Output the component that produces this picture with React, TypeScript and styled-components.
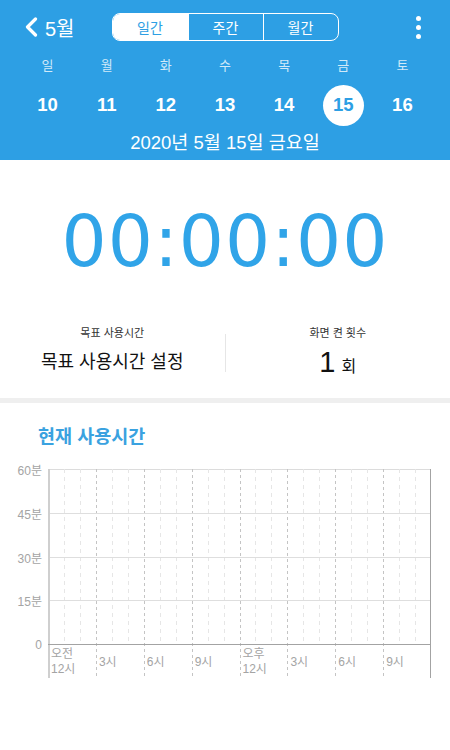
import React from "react";
import styled, { createGlobalStyle } from "styled-components";

const BLUE = "#2d9fe4";

const Global = createGlobalStyle`
  html, body { margin: 0; padding: 0; background: #fff; }
  body { font-family: "Liberation Sans", "Noto Sans CJK KR", sans-serif; }
  * { box-sizing: border-box; }
`;

const Page = styled.div`
  width: 450px;
  min-height: 750px;
  background: #fff;
`;

const Header = styled.header`
  background: ${BLUE};
  color: #fff;
  padding-bottom: 7px;
`;

const TopBar = styled.div`
  display: grid;
  grid-template-columns: 1fr auto 1fr;
  align-items: center;
  height: 54px;
`;

const Back = styled.div`
  justify-self: start;
  display: flex;
  align-items: center;
  gap: 7px;
  padding-left: 25px;
  font-size: 20px;
  color: #fff;
`;

const Segmented = styled.div`
  display: flex;
  border: 1px solid #fff;
  border-radius: 8px;
  overflow: hidden;
  height: 28px;
`;

const Segment = styled.div<{ $active?: boolean }>`
  width: 75px;
  display: flex;
  align-items: center;
  justify-content: center;
  font-size: 14px;
  background: ${(p) => (p.$active ? "#fff" : "transparent")};
  color: ${(p) => (p.$active ? BLUE : "#fff")};
  & + & {
    border-left: 1px solid #fff;
  }
`;

const Kebab = styled.div`
  justify-self: end;
  padding-right: 29px;
  display: flex;
  flex-direction: column;
  gap: 4px;
  span {
    width: 5px;
    height: 5px;
    border-radius: 50%;
    background: #fff;
  }
`;

const WeekGrid = styled.div`
  display: grid;
  grid-template-columns: repeat(7, 1fr);
  padding: 0 18px;
`;

const WeekDay = styled.div`
  height: 20px;
  display: flex;
  align-items: center;
  justify-content: center;
  font-size: 13px;
  color: rgba(255, 255, 255, 0.78);
`;

const DateRow = styled(WeekGrid)`
  margin-top: 10px;
`;

const DateCell = styled.div`
  height: 42px;
  display: flex;
  align-items: center;
  justify-content: center;
`;

const DateNum = styled.div<{ $selected?: boolean }>`
  width: 41px;
  height: 41px;
  border-radius: 50%;
  display: flex;
  align-items: center;
  justify-content: center;
  font-size: 18.5px;
  font-weight: 700;
  background: ${(p) => (p.$selected ? "#fff" : "transparent")};
  color: ${(p) => (p.$selected ? BLUE : "#fff")};
`;

const FullDate = styled.div`
  margin-top: 7px;
  height: 20px;
  line-height: 20px;
  text-align: center;
  font-size: 18.5px;
`;

const TimerSection = styled.section`
  padding-top: 46px;
  display: flex;
  justify-content: center;
`;

const Timer = styled.div`
  font-family: "DejaVu Sans", sans-serif;
  font-size: 71px;
  line-height: 72px;
  height: 72px;
  color: #30a4e8;
  letter-spacing: 1px;
`;

const Stats = styled.section`
  display: flex;
  align-items: flex-start;
  margin-top: 47px;
`;

const Stat = styled.div`
  flex: 1;
  display: flex;
  flex-direction: column;
  align-items: center;
  gap: 9px;
`;

const StatLabel = styled.div`
  font-size: 11px;
  line-height: 16px;
  color: #333;
`;

const StatValue = styled.div`
  font-size: 18px;
  line-height: 24px;
  color: #111;
  display: flex;
  align-items: baseline;
  gap: 6px;
`;

const BigNum = styled.span`
  font-size: 29px;
  line-height: 24px;
`;

const Unit = styled.span`
  font-size: 16px;
`;

const Divider = styled.div`
  width: 1px;
  height: 38px;
  margin-top: 9px;
  background: #e6e6e6;
`;

const Band = styled.div`
  height: 5px;
  background: #efefef;
  margin-top: 19px;
`;

const Title = styled.h2`
  margin: 22px 0 0 38px;
  font-size: 18.5px;
  line-height: 24px;
  font-weight: 600;
  color: #3aa2e0;
`;

const Chart = styled.div`
  display: flex;
  margin-top: 20px;
`;

const YAxis = styled.div`
  width: 48px;
  height: 176px;
  padding-right: 6px;
  display: flex;
  flex-direction: column;
  justify-content: space-between;
  align-items: flex-end;
`;

const YLabel = styled.div`
  height: 1px;
  display: flex;
  align-items: center;
  font-size: 12px;
  color: #a4a4a4;
  white-space: nowrap;
`;

const Plot = styled.div`
  position: relative;
  width: 383px;
  height: 210px;
`;

const Grid = styled.svg`
  position: absolute;
  inset: 0;
`;

const XAxis = styled.div`
  position: relative;
  margin-top: 176px;
  height: 34px;
  display: grid;
  grid-template-columns: repeat(8, 1fr);
  align-items: center;
`;

const XLabel = styled.div`
  padding-left: 3px;
  font-size: 12px;
  line-height: 15px;
  color: #a4a4a4;
`;

const days = ["일", "월", "화", "수", "목", "금", "토"];
const dates = [10, 11, 12, 13, 14, 15, 16];
const xLabels: React.ReactNode[] = [
  <>오전<br />12시</>,
  "3시",
  "6시",
  "9시",
  <>오후<br />12시</>,
  "3시",
  "6시",
  "9시",
];

function ChartGrid() {
  const W = 383;
  const H = 175;
  const lines: React.ReactNode[] = [];
  for (let i = 1; i < 24; i++) {
    const x = Math.round((i * W) / 24) + 0.5;
    const major = i % 3 === 0;
    lines.push(
      <line
        key={"v" + i}
        x1={x}
        x2={x}
        y1={0}
        y2={major ? 209 : H}
        stroke={major ? "#c4c4c4" : "#e6e6e6"}
        strokeWidth={1}
        strokeDasharray={major ? "3 3" : "4 4"}
      />
    );
  }
  [1, 2, 3].forEach((k) => {
    const y = Math.round((k * H) / 4) + 0.5;
    lines.push(
      <line key={"h" + k} x1={0} x2={W} y1={y} y2={y} stroke="#dedede" strokeWidth={1} />
    );
  });
  return (
    <Grid width={383} height={210} viewBox="0 0 383 210">
      <line x1={0} x2={W} y1={0.5} y2={0.5} stroke="#dcdcdc" strokeWidth={1} />
      {lines}
      <line x1={1} x2={1} y1={0} y2={209} stroke="#cfcfcf" strokeWidth={2} />
      <line x1={W - 0.5} x2={W - 0.5} y1={0} y2={209} stroke="#a3a3a3" strokeWidth={1} />
      <line x1={0} x2={W} y1={H + 0.5} y2={H + 0.5} stroke="#a3a3a3" strokeWidth={1} />
    </Grid>
  );
}

export default function App() {
  return (
    <Page>
      <Global />
      <Header>
        <TopBar>
          <Back>
            <svg width="13" height="20" viewBox="0 0 13 20">
              <polyline
                points="10.5,2 2.5,10 10.5,18"
                fill="none"
                stroke="#fff"
                strokeWidth="3.2"
                strokeLinecap="round"
                strokeLinejoin="round"
              />
            </svg>
            <span>5월</span>
          </Back>
          <Segmented>
            <Segment $active>일간</Segment>
            <Segment>주간</Segment>
            <Segment>월간</Segment>
          </Segmented>
          <Kebab>
            <span />
            <span />
            <span />
          </Kebab>
        </TopBar>
        <WeekGrid>
          {days.map((d) => (
            <WeekDay key={d}>{d}</WeekDay>
          ))}
        </WeekGrid>
        <DateRow>
          {dates.map((d) => (
            <DateCell key={d}>
              <DateNum $selected={d === 15}>{d}</DateNum>
            </DateCell>
          ))}
        </DateRow>
        <FullDate>2020년 5월 15일 금요일</FullDate>
      </Header>

      <TimerSection>
        <Timer>00:00:00</Timer>
      </TimerSection>

      <Stats>
        <Stat>
          <StatLabel>목표 사용시간</StatLabel>
          <StatValue>목표 사용시간 설정</StatValue>
        </Stat>
        <Divider />
        <Stat>
          <StatLabel>화면 켠 횟수</StatLabel>
          <StatValue>
            <BigNum>1</BigNum>
            <Unit>회</Unit>
          </StatValue>
        </Stat>
      </Stats>

      <Band />

      <Title>현재 사용시간</Title>

      <Chart>
        <YAxis>
          <YLabel>60분</YLabel>
          <YLabel>45분</YLabel>
          <YLabel>30분</YLabel>
          <YLabel>15분</YLabel>
          <YLabel>0</YLabel>
        </YAxis>
        <Plot>
          <ChartGrid />
          <XAxis>
            {xLabels.map((l, i) => (
              <XLabel key={i}>{l}</XLabel>
            ))}
          </XAxis>
        </Plot>
      </Chart>
    </Page>
  );
}
